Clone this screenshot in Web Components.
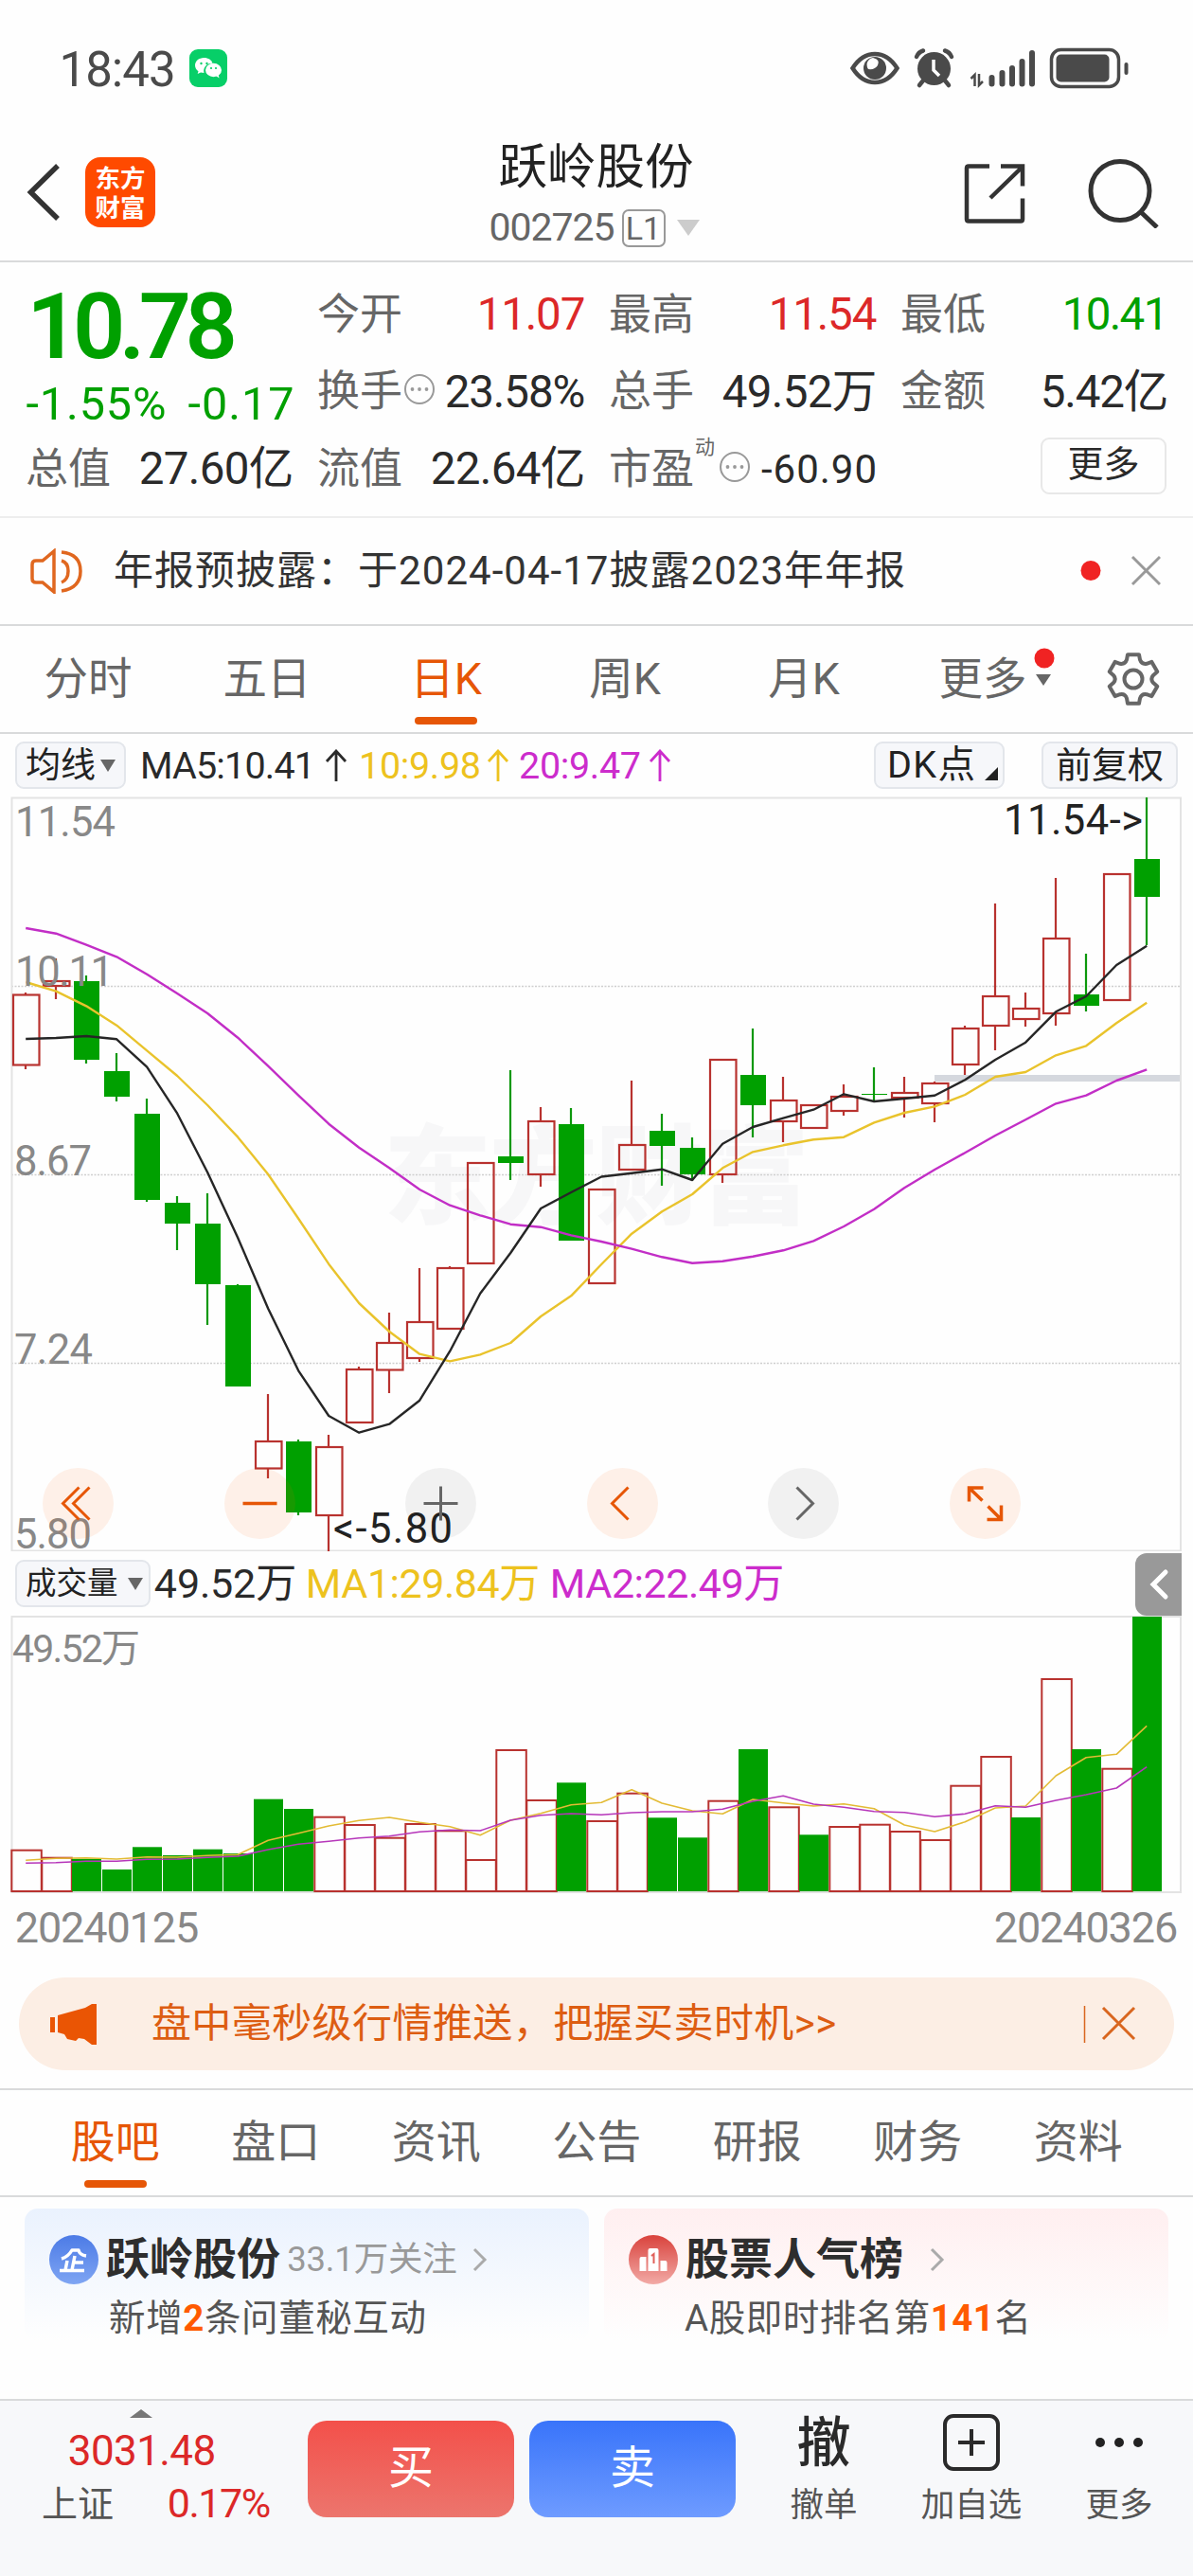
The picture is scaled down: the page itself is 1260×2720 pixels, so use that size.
<!DOCTYPE html>
<html lang="zh-CN">
<head>
<meta charset="utf-8">
<title>跃岭股份 002725</title>
<style>
html,body{margin:0;padding:0;background:#fefefe}
body{width:1260px;height:2720px;overflow:hidden;display:flex;flex-direction:column;
 font-family:Roboto,"Noto Sans CJK SC",sans-serif;color:#333;line-height:1;
 --orange:#e65606;--green:#00a000;--red:#dc2828;--line:#d9dadb;--yellow:#edc21e;--purple:#cc2ccc}
</style>
</head>
<body>
<status-bar></status-bar>
<app-header></app-header>
<quote-board></quote-board>
<notice-bar>年报预披露：于2024-04-17披露2023年年报</notice-bar>
<period-tabs></period-tabs>
<chart-tools></chart-tools>
<k-chart></k-chart>
<volume-head></volume-head>
<volume-chart></volume-chart>
<date-axis></date-axis>
<promo-bar>盘中毫秒级行情推送，把握买卖时机&gt;&gt;</promo-bar>
<section-tabs></section-tabs>
<card-row></card-row>
<trade-bar></trade-bar>
<script>
function define(name, html, after) {
  const t = document.createElement('template');
  t.innerHTML = '<style>*{box-sizing:border-box}:host{display:flex;flex:none;box-sizing:border-box}svg{display:block;flex:none}</style>' + html;
  customElements.define(name, class extends HTMLElement {
    constructor() {
      super();
      this.attachShadow({mode: 'open'}).appendChild(t.content.cloneNode(true));
      if (after) after(this.shadowRoot, this);
    }
  });
}

define('status-bar', `<style>:host{height:144px;padding:0 68px 0 65px;align-items:center}
.app{margin-left:17px}.sp{flex:1}</style>
<fit-text size="51" w="118" style="color:#4a4a4a;margin-top:2px">18:43</fit-text>
<svg class="app" width="40" height="40" viewBox="0 0 40 40"><rect width="40" height="40" rx="9" fill="#07cf68"/><path fill="#fff" d="M15.5 9C10 9 6 12.600 6 17c0 2.500 1.300 4.700 3.500 6.200L8.700 26l3.300-1.600c1 .3 2.200.5 3.500.5-1.500-6 3.500-10.500 9-10.200C23.500 11.300 20 9 15.500 9z"/><ellipse cx="25.500" cy="22" rx="8.500" ry="7.200" fill="#fff"/><path d="M28 28l3.500 2.500-.8-4z" fill="#fff"/><g fill="#07cf68"><circle cx="12.500" cy="15" r="1.200"/><circle cx="18.500" cy="15" r="1.200"/><circle cx="23" cy="20" r="1.100"/><circle cx="28" cy="20" r="1.100"/></g></svg>
<div class="sp"></div>
<svg width="296" height="46" viewBox="896 49 296 46" fill="none" stroke="#4a4a4a">
<path d="M900.500 72Q910 57 924 57T947.500 72Q938 87 924 87T900.500 72z" stroke-width="4.500"/><circle cx="924" cy="72" r="12" fill="#4a4a4a" stroke="none"/><path d="M922 61q8 2 5 8-3 5-10 4-3-5 0-9 2-3 5-3z" fill="#fefefe" stroke="none"/>
<circle cx="986.500" cy="72.500" r="17.500" fill="#4a4a4a" stroke="none"/><path d="M968 60q2-5 7-6.500M1005 60q-2-5-7-6.500M975 85l-4 5M998 85l4 5" stroke-width="4.500" stroke-linecap="round"/><path d="M986 63v11l6 6" stroke="#fefefe" stroke-width="3.500"/>
<g stroke-width="2.500"><path d="M1025.500 83l4-4v12M1034 78v12l4-4"/></g>
<g stroke-width="6" stroke-linecap="round"><path d="M1047.500 82v6.500M1058.500 77v11.500M1069 72v16.500M1079.500 65v23.500M1090 56v32.500"/></g>
<rect x="1110.500" y="52.500" width="71" height="39" rx="10" stroke-width="3.500"/><rect x="1115.500" y="57.500" width="56" height="29" rx="5" fill="#4a4a4a" stroke="none"/><path d="M1189.500 68v9" stroke-width="4" stroke-linecap="round"/></svg>`);

define('app-header', `<style>:host{height:133px;border-bottom:2px solid var(--line);padding:6px 34px 0 28px;align-items:flex-start}
.back{margin-top:22px}.logo{width:74px;height:74px;border-radius:16px;background:#ff4a00;color:#fff;margin:16px 0 0 25px;font:700 26.500px/31px "Noto Sans CJK SC",sans-serif;text-align:center;padding-top:5px}
.mid{flex:1;display:flex;flex-direction:column;align-items:center}
.t{font-size:51.500px;line-height:52px;color:#222;margin-left:79px;margin-top:1px}
.c{display:flex;align-items:center;margin:17px 0 0 77px}
.l{width:46px;height:40px;border:2px solid #999;border-radius:7px;margin:0 12px 0 9px;display:flex;align-items:center;justify-content:center;color:#666}
.acts{margin-top:17px}</style>
<svg class="back" width="37" height="62" viewBox="28 172 37 62" fill="none" stroke="#333" stroke-width="5.500"><path d="M61 175L32.500 203 61 231"/></svg>
<div class="logo">东方<br>财富</div>
<div class="mid"><div class="t">跃岭股份</div><div class="c"><fit-text size="41" w="129" style="color:#666">002725</fit-text><span class="l"><fit-text size="34" w="34">L1</fit-text></span><svg width="24" height="17"><path d="M0 0h24L12 17z" fill="#ccc"/></svg></div></div>
<svg class="acts" width="210" height="74" viewBox="1016 165 210 74" fill="none" stroke="#333" stroke-width="4.500"><path d="M1045 173.500h-22q-2 0-2 2v54q0 2 2 2h55q2 0 2-2v-22M1057 173.500h23v21M1080 174l-34 33"/><circle cx="1183" cy="199.500" r="31" stroke-width="5"/><path d="M1205 222l17 16" stroke-width="5"/></svg>`);

const more = '<svg style="margin:-6px 0 0 1px" width="34" height="34" fill="none" stroke="#999"><circle cx="17" cy="17" r="15" stroke-width="2"/><g fill="#999" stroke="none"><circle cx="9.500" cy="17" r="1.900"/><circle cx="17" cy="17" r="1.900"/><circle cx="24.500" cy="17" r="1.900"/></g></svg>';
const cell = (l, v, w, cls = '', ic = '') => `<div class="cell"><span class="l">${l}</span>${ic}<i></i><fit-text class="${cls}" size="47.500" w="${w}">${v}</fit-text></div>`;
define('quote-board', `<style>:host{height:270px;border-bottom:2px solid #eee;padding:15px 26px 0 27px;gap:27px;color:#2a2a2a}
.col{width:281px;display:flex;flex-direction:column}.cell{height:81.500px;display:flex;align-items:center}
i{flex:1}.l{font-size:45px;color:#666;line-height:46px}.r{color:var(--red)}.g{color:var(--green)}
.price{height:104px;display:flex;align-items:center;padding:3px 0 0 6px;color:var(--green)}.chg{height:59px;display:flex;align-items:center;justify-content:space-between;color:var(--green);padding:3px 0 0 3px}
.sup{font-size:21px;color:#666;align-self:flex-start;margin:7px 3px 0 1px}
.btn{align-self:flex-end;width:133px;height:60px;border:2px solid #e8e8e8;border-radius:9px;display:flex;align-items:center;justify-content:center;font-size:38px;margin-top:7px;padding-bottom:4px}</style>
<div class="col"><div class="price"><fit-text size="97" w="213" style="font-weight:600">10.78</fit-text></div><div class="chg"><fit-text size="48.500" w="143">-1.55%</fit-text><fit-text size="48.500" w="107">-0.17</fit-text></div>${cell('总值', '27.60亿', 159)}</div>
<div class="col">${cell('今开', '11.07', 110, 'r')}${cell('换手', '23.58%', 144, '', more)}${cell('流值', '22.64亿', 159)}</div>
<div class="col">${cell('最高', '11.54', 110, 'r')}${cell('总手', '49.52万', 159)}
<div class="cell"><span class="l">市盈</span><span class="sup">动</span>${more}<i></i><fit-text size="42" w="118">-60.90</fit-text></div></div>
<div class="col">${cell('最低', '10.41', 108, 'g')}${cell('金额', '5.42亿', 131)}<div class="btn">更多</div></div>`);

define('notice-bar', `<style>:host{height:114px;border-bottom:2px solid var(--line);padding:0 34px 0 31px;align-items:center}
.x{flex:1;margin-left:32px}</style>
<svg width="58" height="48" viewBox="31 578 58 48" fill="none" stroke="#e0671f" stroke-width="3.500"><path d="M57 581v43L45 614H38q-4 0-4-4V595q0-4 4-4h7z"/><path d="M65 591q7 2 7 11t-7 12M65 582q20 2 20 20t-20 21"/></svg>
<div class="x"><fit-text size="42" w="832" style="margin-left:1px"></fit-text></div>
<svg width="86" height="36" viewBox="1140 585 86 36"><circle cx="1152" cy="602.500" r="10.500" fill="#f02323"/><path d="M1196 588l29 29M1225 588l-29 29" stroke="#999" stroke-width="3"/></svg>`, (r, el) => {
  r.querySelector('fit-text').textContent = el.textContent;
});

const periods = ['分时', '五日', '日K', '周K', '月K', '更多'];
define('period-tabs', `<style>:host{height:114px;border-bottom:2px solid var(--line);align-items:stretch}
.t{width:189px;display:flex;justify-content:center;font-size:46.500px;line-height:46px;padding:33px 3px 0 0;color:#666;position:relative}
.on{color:var(--orange)}.on:after{content:"";position:absolute;left:60px;bottom:8px;width:66px;height:8px;border-radius:4px;background:var(--orange)}
.m{position:absolute;left:147px;top:23px}.gear{margin:27px 0 0 34px}</style>
${periods.map((p, i) => `<div class="t ${i == 2 ? 'on' : ''}">${p}${i == 5 ? '<svg class="m" width="24" height="42"><circle cx="11" cy="11" r="10.500" fill="#f02323"/><path d="M2 28h16l-8 12z" fill="#666"/></svg>' : ''}</div>`).join('')}
<svg class="gear" width="58" height="58" viewBox="-29 -29 58 58" fill="none" stroke="#666" stroke-width="4" stroke-linejoin="round"><path id="g"/><circle r="9.500"/></svg>`, r => {
  let d = '';
  for (let k = 0; k < 6; k++) {
    const a = k * 60 - 90, p = (q, rad) => { const z = (a + q) * Math.PI / 180; return (Math.cos(z) * rad).toFixed(1) + ' ' + (Math.sin(z) * rad).toFixed(1); };
    d += (k ? 'L' : 'M') + p(-13, 26.5) + 'L' + p(13, 26.5) + 'L' + p(19, 21.5) + 'Q' + p(30, 17.5) + ' ' + p(41, 21.5);
  }
  r.getElementById('g').setAttribute('d', d + 'z');
});

const chip = '.chip{height:50px;border:2px solid #e3e6eb;border-radius:9px;background:#f6f7fa;display:flex;align-items:center;color:#222;font-size:37px}';
const arr = '<svg width="24" height="34" viewBox="0 0 24 34" fill="none" stroke="currentColor" stroke-width="2.800"><path d="M12 34V2M2 13L12 2l10 11"/></svg>';
define('chart-tools', `<style>:host{height:66px;padding:8px 16px 0 16px;align-items:flex-start}${chip}
.v{display:flex;align-items:center;height:50px}.v fit-text{margin-top:2px}.sp{flex:1}</style>
<div class="chip" style="width:117px;padding-left:9px">均线<svg style="margin-left:5px" width="16" height="13"><path d="M0 0h16L8 13z" fill="#666"/></svg></div>
<div class="v" style="color:#2a2a2a;margin-left:17px"><fit-text size="39.500" w="181" style="margin-right:12px">MA5:10.41</fit-text>${arr}</div>
<div class="v" style="color:var(--yellow);margin-left:14px"><fit-text size="39.500" w="125" style="margin-right:8px">10:9.98</fit-text>${arr}</div>
<div class="v" style="color:var(--purple);margin-left:12px"><fit-text size="39.500" w="125" style="margin-right:10px">20:9.47</fit-text>${arr}</div>
<div class="sp"></div>
<div class="chip" style="width:138px;padding-left:14px"><fit-text size="39.500" w="89">DK点</fit-text><svg style="margin:18px 0 0 12px" width="14" height="14"><path d="M14 0v14H0z" fill="#222"/></svg></div>
<div class="chip" style="width:144px;padding-left:13px;margin-left:39px;font-size:38px">前复权</div>`);

/* [direction, high, body top, body bottom, low] in page pixels */
const candles = [['r',1048,1050.5,1124.5,1129],['r',1012,1036,1041,1055],['g',1030,1036,1119,1123],['g',1112,1131,1158,1163],['g',1160,1176,1267,1269],['g',1263,1270,1292,1320],['g',1260,1292,1356,1399],['g',1356,1357,1464,1464],['r',1472,1522,1550.5,1561],['g',1520,1522,1597,1600],['r',1515,1528,1600,1638],['r',1443,1446,1502,1502],['r',1386,1418,1446.5,1471],['r',1339,1396,1434,1438],['r',1337,1339,1403,1403],['r',1228,1228,1334,1334],['g',1130,1221,1228,1246],['r',1169,1184,1240,1253],['g',1170,1187,1310,1310],['r',1256,1256,1355,1355],['r',1141,1209,1235,1235],['g',1176,1194,1210,1252],['g',1201,1212,1240,1247],['r',1119,1119,1240,1249],['g',1086,1135,1167,1201],['r',1137,1162,1184,1206],['r',1167,1167,1191,1191],['r',1145,1158,1173,1178],['g',1127,1155,1156,1163],['r',1137,1154,1159,1180],['r',1142,1144,1165,1185],['r',1083,1086,1124,1135],['r',954,1052,1083,1109],['r',1048,1065,1076,1084],['r',927,991,1070,1083],['g',1007,1050,1062,1068],['r',923,923,1056,1056],['g',842,907,947,998]];
const ma5 = [1097,1096,1094,1097.3,1126.7,1175.7,1238,1307,1381.7,1447.3,1495,1512.7,1503.7,1478.7,1426.7,1365.7,1323,1276,1259,1242.500,1238.7,1234.7,1246,1207.7,1190,1180.7,1171.7,1155.3,1163,1160,1156.7,1140.3,1119,1100.7,1068.3,1052,1019,998.7];
const ma10 = [1037,1046.7,1062.3,1082.7,1109.3,1136,1167,1200.7,1240,1286.7,1334.7,1376,1406,1429.7,1437.3,1430.3,1418,1390,1368.3,1335,1302.7,1279.3,1261,1233.3,1216.3,1209.3,1203.3,1200.7,1185.3,1175,1168.3,1156,1137,1132,1114.3,1104.3,1080.3,1058.7];
const ma20 = [980,985.7,997.7,1010.3,1028.7,1049,1070,1095.7,1125.7,1156.7,1186.7,1211.7,1233.3,1256,1272.7,1283.3,1292.7,1295.7,1304.3,1311,1318.7,1327.3,1333.7,1331.7,1326.7,1320.3,1310.3,1295,1276.7,1254.3,1235,1217.3,1199,1182.3,1165.3,1156.7,1141,1129.3];
const volTop = [1953.7,1961.7,1962.7,1974,1950.3,1959,1952.7,1957,1899.7,1910,1918.7,1927,1940.7,1926,1933.3,1964,1848,1901,1882.3,1923,1893.7,1919.3,1940.3,1901.7,1847,1908.3,1937.3,1929,1926.7,1934,1943,1885.7,1855,1919,1773,1847,1867.7,1707];
const volUp = 'rrggggggggrrrrrrrrgrrggrgrgrrrrrrgrgrg';
const vma1 = [1964.3,1962.3,1961.7,1963,1960.7,1961,1959.3,1958.3,1943.3,1935.7,1928,1922.3,1919,1924.3,1928.7,1937.7,1922,1914.7,1905.7,1903.3,1889.7,1904,1912,1915.3,1900,1903.7,1907,1904.7,1909.7,1927,1934,1923.7,1909,1907,1875,1855.7,1852.3,1822.3];
const vma2 = [1967.3,1966.7,1965.3,1965.3,1963.3,1963,1961.3,1960,1953,1947.3,1944.3,1940.7,1938.7,1934.3,1932.3,1933,1922,1916.7,1915,1916.3,1914,1913,1913,1910.3,1902,1896.3,1905,1908.3,1912.7,1913.7,1918.3,1915.3,1906.7,1908.3,1901,1895,1888,1865.7];
const cx = i => 27.2 + i * 32;
const poly = (a, c, w) => `<polyline points="${a.map((y, i) => cx(i) + ',' + y).join(' ')}" fill="none" stroke="${c}" stroke-width="${w}" stroke-linejoin="round"/>`;
const RED = '#b8322f', GREEN = '#00a000';
const candleSvg = candles.map(([k, h, t, b, l], i) => {
  const x = Math.round(cx(i));
  return k == 'g' ? `<path d="M${x} ${h}V${l}" stroke="#0d980d" stroke-width="2.200"/><rect x="${x - 13}" y="${t}" width="27" height="${b - t}" fill="${GREEN}"/>`
    : `<path d="M${x} ${h}V${t}M${x} ${b}V${l}" stroke="${RED}" stroke-width="2.200"/><rect x="${x - 13}" y="${t}" width="27.500" height="${b - t}" fill="none" stroke="${RED}" stroke-width="2.200"/>`;
}).join('');
const tx = (x, y, w, s, c = '#888') => `<text x="${x}" y="${y}" textLength="${w}" lengthAdjust="spacing" font-size="43.500" fill="${c}">${s}</text>`;

define('k-chart', `<style>:host{height:797px;position:relative}
.ov{position:absolute;left:45px;top:709px;display:flex;gap:116.500px}.ov svg{border-radius:50%}.o{background:rgba(255,96,10,.09);color:var(--orange)}.n{background:rgba(0,0,0,.05);color:#666}</style>
<svg width="1260" height="797" viewBox="0 841 1260 797">
<g font-family="Noto Sans CJK SC" font-weight="900" font-size="114" fill="#f7f7f8"><text x="405" y="1283" textLength="450">东方财富</text></g>
<g stroke="#cfcfcf" stroke-width="1.500" stroke-dasharray="2 1.500"><path d="M12 1041.500H1247M12 1240.500H1247M12 1439.500H1247"/></g>
<rect x="987" y="1135" width="260" height="7" fill="#d5d8de"/>
<path d="M12.500 842.500H1247V1637.500H12.500z" fill="none" stroke="#e3e3e3" stroke-width="2"/>
${candleSvg}${poly(ma10, '#e9c32c', 2.4)}${poly(ma20, '#c22ec6', 2.4)}${poly(ma5, '#262626', 2.4)}
${tx(16, 883, 106, '11.54')}${tx(16, 1041, 104, '10.11')}${tx(15, 1241, 82, '8.67')}${tx(15, 1440, 83, '7.24')}${tx(15, 1635, 82, '5.80')}
${tx(1060, 881, 147, '11.54-&gt;', '#222')}${tx(352, 1629, 126, '&lt;-5.80', '#222')}
</svg>
<div class="ov">
<svg class="o" width="75" height="75" viewBox="-37.500 -37.500 75 75" fill="none" stroke="currentColor" stroke-width="3"><path d="M1-17L-16 0 1 17M12-17L-5 0 12 17"/></svg>
<svg class="o" width="75" height="75" viewBox="-37.500 -37.500 75 75" stroke="currentColor" stroke-width="3.500"><path d="M-18 0H18"/></svg>
<svg class="n" width="75" height="75" viewBox="-37.500 -37.500 75 75" stroke="currentColor" stroke-width="3"><path d="M-18 0H18M0-18V18"/></svg>
<svg class="o" width="75" height="75" viewBox="-37.500 -37.500 75 75" fill="none" stroke="currentColor" stroke-width="3"><path d="M6-17L-11 0 6 17"/></svg>
<svg class="n" width="75" height="75" viewBox="-37.500 -37.500 75 75" fill="none" stroke="currentColor" stroke-width="3"><path d="M-7-17L10 0-7 17"/></svg>
<svg class="o" width="75" height="75" viewBox="-37.500 -37.500 75 75" fill="none" stroke="currentColor" stroke-width="3.500"><path d="M-2-16.500H-17V-2M-17-16.500L-3-3M2 17H17V2M17 17L3 3"/></svg>
</div>`);

define('volume-head', `<style>:host{height:68px;padding:9px 12px 0 16px;align-items:flex-start}${chip}.v{height:50px;display:flex;align-items:center}
.tab{margin:-7px 0 0 auto;background:#999;border-radius:12px 0 0 12px}</style>
<div class="chip" style="width:143px;padding-left:9px;font-size:32.500px">成交量<svg style="margin-left:10px" width="16" height="13"><path d="M0 0h16L8 13z" fill="#666"/></svg></div>
<div class="v"><fit-text size="43" w="146" style="color:#2a2a2a;margin-left:6px">49.52万</fit-text><fit-text size="43" w="243" style="color:var(--yellow);margin-left:14px">MA1:29.84万</fit-text><fit-text size="43" w="243" style="color:var(--purple);margin-left:15px">MA2:22.49万</fit-text></div>
<svg class="tab" width="49" height="66" fill="none" stroke="#fff" stroke-width="5" stroke-linecap="round"><path d="M32 20L19 33l13 13"/></svg>`);

define('volume-chart', `<style>:host{height:293px}</style>
<svg width="1260" height="293" viewBox="0 1706 1260 293">
<path d="M12.500 1707H1247V1998H12.500z" fill="none" stroke="#e3e3e3" stroke-width="2"/>
${volTop.map((y, i) => { const x = Math.round(cx(i) - 15.2); return volUp[i] == 'g' ? `<rect x="${x}" y="${y}" width="31" height="${1997 - y}" fill="${GREEN}"/>` : `<rect x="${x + .3}" y="${y}" width="31.500" height="${1997 - y}" fill="none" stroke="${RED}" stroke-width="2"/>`; }).join('')}
${poly(vma1, '#e3bb35', 1.6)}${poly(vma2, '#b636ba', 1.6)}
<text x="13" y="1755" font-size="41" fill="#888" textLength="135">49.52万</text>
</svg>`);

define('date-axis', `<style>:host{height:89px;padding:14px 18px 0 18px;justify-content:space-between;color:#888}</style>
<fit-text size="45" w="190">20240125</fit-text><fit-text size="45" w="190">20240326</fit-text>`);

define('promo-bar', `<style>:host{height:98px;margin:0 20px 19px;border-radius:49px;background:#fceee4;align-items:center;padding:0 40px 0 32px;color:#dd5d12}
.x{flex:1;margin-left:59px}</style>
<svg width="51" height="46" viewBox="52 2114 51 46" fill="#ea5504"><path d="M53 2130h5v16h-5zM61 2128l29-8 7-4h5v43h-5l-8-6-6-1-3 3-9-2-3-5-7-2z"/></svg>
<div class="x"><fit-text size="42" w="719"></fit-text></div>
<svg width="58" height="44" viewBox="1142 2115 58 44" stroke="#d9661f"><path d="M1145.500 2118v39" stroke-width="1.500"/><path d="M1165 2120l33 33M1198 2120l-33 33" stroke-width="3"/></svg>`, (r, el) => {
  r.querySelector('fit-text').textContent = el.textContent;
});

define('section-tabs', `<style>:host{height:115px;border-top:2px solid var(--line);border-bottom:2px solid var(--line);padding-left:37px}
.t{width:169.500px;text-align:center;font-size:47px;line-height:48px;padding-top:31px;color:#666;position:relative}
.on{color:var(--orange)}.on:after{content:"";position:absolute;left:52px;bottom:8px;width:66px;height:8px;border-radius:4px;background:var(--orange)}</style>
${['股吧', '盘口', '资讯', '公告', '研报', '财务', '资料'].map((p, i) => `<div class="t ${i ? '' : 'on'}">${p}</div>`).join('')}`);

define('info-card', `<style>:host{width:596px;height:140px;border-radius:14px;background:linear-gradient(var(--tint),#fefefe);flex-direction:column;padding:27px 0 0 26px}
.h{display:flex;align-items:center;height:54px}.t{font-size:46px;font-weight:700;color:#2e2e2e;margin-left:8px;line-height:54px;margin-top:-3px}
.s{color:#999;font-size:36px;margin-left:10px}.ch{margin-left:18px}.b{font-size:38.500px;color:#555;line-height:40px;margin-top:16px}</style>
<div class="h"><slot name="icon"></slot><span class="t"><slot name="title"></slot></span><span class="s"><slot name="sub"></slot></span><svg class="ch" width="16" height="26" fill="none" stroke="#aaa" stroke-width="3"><path d="M2 2l11 11L2 24"/></svg></div>
<div class="b"><slot></slot></div>`);

define('card-row', `<style>:host{height:213px;padding:12px 26px 0;gap:16px;align-items:flex-start}b{color:#ff5a00}</style>
<info-card style="--tint:#eaf2fe"><svg slot="icon" width="52" height="52"><defs><linearGradient id="a" x2="0" y2="1"><stop stop-color="#4c7be6"/><stop offset="1" stop-color="#7fa5f3"/></linearGradient></defs><circle cx="26" cy="26" r="26" fill="url(#a)"/><g fill="none" stroke="#fff" stroke-width="3.500" stroke-linejoin="round"><path d="M13 25q7-2 11-9h7q1 5 8 6M27 22l-3 15M19 27l-2 10M27 29h9M11 37.500h26"/></g></svg>
<span slot="title">跃岭股份</span><fit-text slot="sub" size="36.500" w="176" style="margin-left:-1px">33.1万关注</fit-text><fit-text size="38.500" w="331" style="margin-left:65px">新增<b>2</b>条问董秘互动</fit-text></info-card>
<info-card style="--tint:#ffeff0"><svg slot="icon" width="52" height="52"><defs><linearGradient id="c" x2="0" y2="1"><stop stop-color="#d9423c"/><stop offset="1" stop-color="#f2aaa6"/></linearGradient></defs><circle cx="26" cy="26" r="26" fill="url(#c)"/><path d="M11.500 25q0-2 2-2h5v15h-7zM20.500 16q0-2 2-2h7q2 0 2 2v22h-11zM33.500 27h5q2 0 2 2v9h-7z" fill="#fff"/><path d="M24 22l2.500-2v10" fill="none" stroke="#e0605a" stroke-width="2"/></svg>
<span slot="title">股票人气榜</span><fit-text size="38.500" w="362" style="margin-left:61px">A股即时排名第<b>141</b>名</fit-text></info-card>`);

define('trade-bar', `<style>:host{height:187px;border-top:2px solid var(--line);background:#f7f8fa;padding-left:27px}
.ix{width:298px;display:flex;flex-direction:column;color:var(--red);position:relative;padding-left:17px}
.up{position:absolute;left:110px;top:9px}.r{display:flex;justify-content:space-between;align-items:center;width:240px;font-size:38px;margin-top:12px}.r span{color:#555}
.b{width:218px;height:102px;border-radius:20px;color:#fff;font-size:48px;display:flex;align-items:center;justify-content:center;margin:21px 16px 0 0;padding-bottom:3px}
.a{display:flex;flex-direction:column;align-items:center;color:#555;font-size:35.500px;padding-top:12px}.i{height:64px;display:flex;align-items:center;color:#2a2a2a;font-size:57px;font-weight:500;margin-bottom:17px}</style>
<div class="ix"><svg class="up" width="24" height="9"><path d="M0 9L12 0l12 9z" fill="#777"/></svg><fit-text size="44" w="152" style="margin:31px 0 0 30px">3031.48</fit-text><div class="r"><span>上证</span><fit-text size="43" w="105">0.17%</fit-text></div></div>
<div class="b" style="background:linear-gradient(#f3504a,#ec756d)">买</div><div class="b" style="background:linear-gradient(#3974fa,#6e9bff)">卖</div>
<div class="a" style="width:154px">
<div class="i">撤</div>撤单</div>
<div class="a" style="width:158px"><div class="i"><svg width="60" height="60" fill="none" stroke="#2a2a2a" stroke-width="4"><rect x="2" y="2" width="56" height="56" rx="9"/><path d="M30 16v28M16 30h28"/></svg></div>加自选</div>
<div class="a" style="width:154px"><div class="i"><svg width="52" height="12" fill="#222"><circle cx="6" cy="6" r="5"/><circle cx="26" cy="6" r="5"/><circle cx="46" cy="6" r="5"/></svg></div>更多</div>`);

/* One line of text whose tracking is set so that it spans exactly w pixels. */
customElements.define('fit-text', class extends HTMLElement {
  connectedCallback() {
    if (this.shadowRoot) return;
    const s = +this.getAttribute('size'), w = +this.getAttribute('w');
    this.attachShadow({mode: 'open'}).innerHTML = `<style>:host{display:block;flex:none;width:${w}px;height:${s}px;font-size:${s}px;line-height:${s}px;white-space:nowrap}span{display:inline-block;margin-left:${-s * .05}px}</style><span><slot></slot></span>`;
    const sp = this.shadowRoot.querySelector('span'), n = this.textContent.trim().length;
    const nat = sp.getBoundingClientRect().width - s * .1;
    sp.style.letterSpacing = ((w - nat) / (n - 1)).toFixed(3) + 'px';
  }
});
</script>
</body>
</html>
